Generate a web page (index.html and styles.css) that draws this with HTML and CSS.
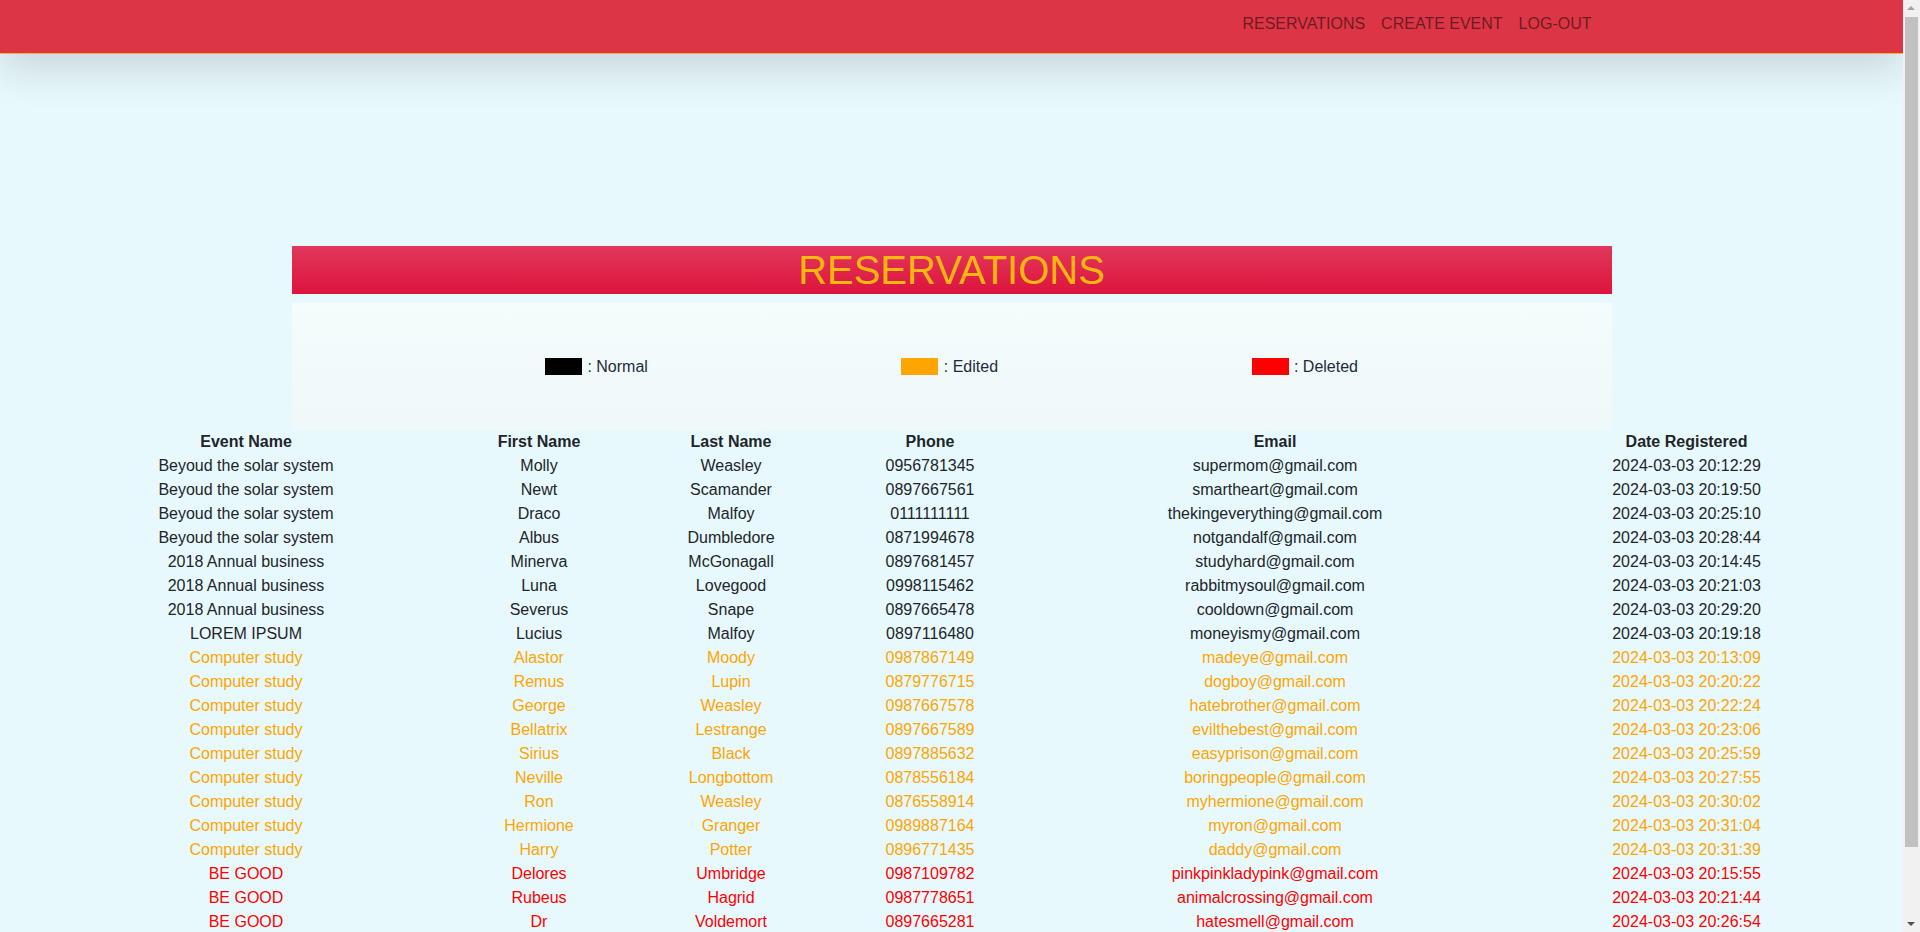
FILE: index.html
```html
<!DOCTYPE html>
<html lang="en">
<head>
<meta charset="utf-8">
<title>Reservations</title>
<link rel="stylesheet" href="styles.css">
</head>
<body>
<div class="page">
<nav class="topbar">
  <div class="container nav-inner">
    <ul class="nav-links">
      <li><a href="#">RESERVATIONS</a></li>
      <li><a href="#">CREATE EVENT</a></li>
      <li><a href="#">LOG-OUT</a></li>
    </ul>
  </div>
</nav>

<main>
  <div class="container">
    <h1 class="title">RESERVATIONS</h1>
    <div class="legend">
      <div class="legend-item"><span class="swatch swatch-normal"></span> : Normal</div>
      <div class="legend-item"><span class="swatch swatch-edited"></span> : Edited</div>
      <div class="legend-item"><span class="swatch swatch-deleted"></span> : Deleted</div>
    </div>
  </div>

  <div class="table-wrap">
    <table class="res-table">
      <colgroup>
        <col class="col-event">
        <col class="col-first">
        <col class="col-last">
        <col class="col-phone">
        <col class="col-email">
        <col class="col-date">
      </colgroup>
      <thead>
        <tr><th>Event Name</th><th>First Name</th><th>Last Name</th><th>Phone</th><th>Email</th><th>Date Registered</th></tr>
      </thead>
      <tbody>
        <tr><td>Beyoud the solar system</td><td>Molly</td><td>Weasley</td><td>0956781345</td><td>supermom@gmail.com</td><td>2024-03-03 20:12:29</td></tr>
        <tr><td>Beyoud the solar system</td><td>Newt</td><td>Scamander</td><td>0897667561</td><td>smartheart@gmail.com</td><td>2024-03-03 20:19:50</td></tr>
        <tr><td>Beyoud the solar system</td><td>Draco</td><td>Malfoy</td><td>0111111111</td><td>thekingeverything@gmail.com</td><td>2024-03-03 20:25:10</td></tr>
        <tr><td>Beyoud the solar system</td><td>Albus</td><td>Dumbledore</td><td>0871994678</td><td>notgandalf@gmail.com</td><td>2024-03-03 20:28:44</td></tr>
        <tr><td>2018 Annual business</td><td>Minerva</td><td>McGonagall</td><td>0897681457</td><td>studyhard@gmail.com</td><td>2024-03-03 20:14:45</td></tr>
        <tr><td>2018 Annual business</td><td>Luna</td><td>Lovegood</td><td>0998115462</td><td>rabbitmysoul@gmail.com</td><td>2024-03-03 20:21:03</td></tr>
        <tr><td>2018 Annual business</td><td>Severus</td><td>Snape</td><td>0897665478</td><td>cooldown@gmail.com</td><td>2024-03-03 20:29:20</td></tr>
        <tr><td>LOREM IPSUM</td><td>Lucius</td><td>Malfoy</td><td>0897116480</td><td>moneyismy@gmail.com</td><td>2024-03-03 20:19:18</td></tr>
        <tr class="edited"><td>Computer study</td><td>Alastor</td><td>Moody</td><td>0987867149</td><td>madeye@gmail.com</td><td>2024-03-03 20:13:09</td></tr>
        <tr class="edited"><td>Computer study</td><td>Remus</td><td>Lupin</td><td>0879776715</td><td>dogboy@gmail.com</td><td>2024-03-03 20:20:22</td></tr>
        <tr class="edited"><td>Computer study</td><td>George</td><td>Weasley</td><td>0987667578</td><td>hatebrother@gmail.com</td><td>2024-03-03 20:22:24</td></tr>
        <tr class="edited"><td>Computer study</td><td>Bellatrix</td><td>Lestrange</td><td>0897667589</td><td>evilthebest@gmail.com</td><td>2024-03-03 20:23:06</td></tr>
        <tr class="edited"><td>Computer study</td><td>Sirius</td><td>Black</td><td>0897885632</td><td>easyprison@gmail.com</td><td>2024-03-03 20:25:59</td></tr>
        <tr class="edited"><td>Computer study</td><td>Neville</td><td>Longbottom</td><td>0878556184</td><td>boringpeople@gmail.com</td><td>2024-03-03 20:27:55</td></tr>
        <tr class="edited"><td>Computer study</td><td>Ron</td><td>Weasley</td><td>0876558914</td><td>myhermione@gmail.com</td><td>2024-03-03 20:30:02</td></tr>
        <tr class="edited"><td>Computer study</td><td>Hermione</td><td>Granger</td><td>0989887164</td><td>myron@gmail.com</td><td>2024-03-03 20:31:04</td></tr>
        <tr class="edited"><td>Computer study</td><td>Harry</td><td>Potter</td><td>0896771435</td><td>daddy@gmail.com</td><td>2024-03-03 20:31:39</td></tr>
        <tr class="deleted"><td>BE GOOD</td><td>Delores</td><td>Umbridge</td><td>0987109782</td><td>pinkpinkladypink@gmail.com</td><td>2024-03-03 20:15:55</td></tr>
        <tr class="deleted"><td>BE GOOD</td><td>Rubeus</td><td>Hagrid</td><td>0987778651</td><td>animalcrossing@gmail.com</td><td>2024-03-03 20:21:44</td></tr>
        <tr class="deleted"><td>BE GOOD</td><td>Dr</td><td>Voldemort</td><td>0897665281</td><td>hatesmell@gmail.com</td><td>2024-03-03 20:26:54</td></tr>
      </tbody>
    </table>
  </div>
</main>
</div>

<div class="fake-scrollbar" aria-hidden="true">
  <span class="sb-arrow sb-up"></span>
  <span class="sb-thumb"></span>
  <span class="sb-arrow sb-down"></span>
</div>
</body>
</html>
```

FILE: styles.css
```css
* { box-sizing: border-box; }

html, body {
  margin: 0;
  padding: 0;
  overflow: hidden;
  height: 100%;
}

body {
  font-family: "Liberation Sans", Arial, sans-serif;
  font-size: 16px;
  line-height: 24px;
  color: #212529;
  background: #e8f9fd;
}

.page {
  width: 1903px;
  height: 100%;
  overflow: hidden;
}

.container {
  max-width: 1320px;
  margin: 0 auto;
}

.topbar {
  position: relative;
  z-index: 2;
  height: 54px;
  background: #dc3545;
  border-bottom: 1px solid #f7b32b;
  box-shadow: 0 16px 40px rgba(0, 0, 0, 0.14);
}

.nav-inner {
  display: flex;
  justify-content: flex-end;
  padding: 4px 12px 0;
}

.nav-links {
  display: flex;
  list-style: none;
  margin: 0;
  padding: 0;
}

.nav-links a {
  display: block;
  padding: 8px 8px;
  color: rgba(0, 0, 0, 0.52);
  text-decoration: none;
  font-size: 16px;
  line-height: 24px;
}

main {
  padding-top: 192px;
}

.title {
  margin: 0 0 9px;
  height: 48px;
  font-size: 40px;
  line-height: 48px;
  font-weight: 400;
  text-align: center;
  color: #ffb70f;
  background: linear-gradient(to bottom, #e3375b, #dc143c);
}

.legend {
  display: flex;
  justify-content: space-evenly;
  align-items: center;
  height: 127px;
  background: linear-gradient(to bottom, #f4fcfc, #eff9fa);
}

.legend-item {
  display: flex;
  align-items: center;
  white-space: pre;
  color: #1f2a3a;
}

.swatch {
  display: inline-block;
  width: 37px;
  height: 17px;
  margin-right: 1px;
}

.swatch-normal { background: #000000; }
.swatch-edited { background: #ffa500; }
.swatch-deleted { background: #ff0000; }

.table-wrap {
  padding-left: 48px;
}

.res-table {
  width: 1807px;
  table-layout: fixed;
  border-collapse: collapse;
  text-align: center;
}

.col-event { width: 396px; }
.col-first { width: 190px; }
.col-last  { width: 194px; }
.col-phone { width: 204px; }
.col-email { width: 486px; }
.col-date  { width: 337px; }

.res-table th,
.res-table td {
  padding: 0;
  line-height: 24px;
  text-align: center;
  white-space: nowrap;
}

.res-table th {
  font-weight: 700;
  color: #212529;
}

.res-table tr.edited td { color: #ffa500; }
.res-table tr.deleted td { color: #ff0000; }

/* browser scrollbar drawn over the right edge */
.fake-scrollbar {
  position: fixed;
  top: 0;
  right: 0;
  width: 17px;
  height: 100%;
  background: #f1f1f1;
}

.sb-thumb {
  position: absolute;
  left: 2px;
  right: 2px;
  top: 17px;
  height: 830px;
  background: #c1c1c1;
}

.sb-arrow {
  position: absolute;
  left: 4px;
  width: 0;
  height: 0;
  border-left: 4px solid transparent;
  border-right: 4px solid transparent;
}

.sb-up {
  top: 6px;
  border-bottom: 4px solid #a3a3a3;
}

.sb-down {
  bottom: 6px;
  border-top: 4px solid #505050;
}
```
